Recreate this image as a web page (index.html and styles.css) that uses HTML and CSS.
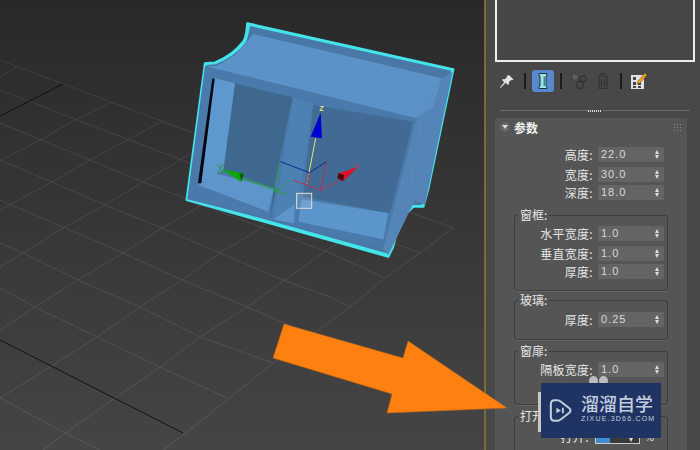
FILE: index.html
```html
<!DOCTYPE html>
<html lang="zh">
<head>
    <meta charset="UTF-8" />
    <title>窗 – 参数</title>
    <link rel="stylesheet" href="styles.css">
</head>
<body>
<div class="app">
    <div class="viewport">
        <svg class="scene" width="484" height="450" viewBox="0 0 484 450">
            <defs>
                <linearGradient id="gridFade" gradientUnits="userSpaceOnUse" x1="0" y1="60" x2="0" y2="450">
                    <stop offset="0" stop-color="#414141" />
                    <stop offset="1" stop-color="#5c5c5c" />
                </linearGradient>
            </defs>
            <g class="grid">
                <path d="M0 60L193 133L453 228" />
                <path d="M0 90L77 120L187 162L393 243L420 253" />
                <path d="M0 123L90 160L143 182L207 207L330 253L385 278" />
                <path d="M0 160L52 182L105 205L162 228L220 253L283 280L330 297L350 307" />
                <path d="M0 200L65 228L123 253L182 280L247 307L312 335" />
                <path d="M0 243L23 253L78 280L140 307L200 337L273 363" />
                <path d="M0 288L35 307L97 337L160 367L227 398" />
                <path d="M0 398L63 432L100 450" />
                <path d="M0 77L17 67" />
                <path d="M0 161L40 140L75 120L112 102" />
                <path d="M0 210L52 182L90 160L127 140L163 121" />
                <path d="M0 267L23 253L63 228L105 205L143 182L180 160L197 150" />
                <path d="M0 330L35 307L78 280L123 253L162 228L197 208L240 182" />
                <path d="M0 398L50 367L97 337L140 307L182 280L220 253L250 235L300 200" />
                <path d="M43 450L67 432L115 398L160 367L200 337L247 307L327 250L380 215" />
                <path d="M150 460L187 432L273 363L350 307L385 278L420 253L453 228" />
            </g>
            <g class="axis">
                <path d="M0 116L63 84" />
                <path d="M0 340L183 433" />
            </g>
            <g transform="translate(170 10) scale(.3333)">
                <!-- window model, in zoomed coordinates -->
                <path class="edge" d="M232 40L850 178L774 540L760 590L730 590Q690 625 684 651L669 711L655 740L50 570L105 160Q120 158 135 158Q190 135 222 92Q230 75 232 40Z" />
                <path fill="#4a78a6" d="M240 48L843 182L770 540L755 585L728 585Q685 620 678 650L662 710L650 730L58 565L110 165Q125 163 137 163Q195 140 228 97Q236 75 240 48Z" />
                <path fill="#5b93c9" d="M110 170Q125 168 137 168Q195 145 228 100L250 72L815 205L740 325L430 265Z" />
                <path fill="#4a7aab" d="M105 168L740 325L640 715L52 568Z" />
                <path fill="#5484b8" d="M815 205L740 325L735 570L765 585L848 185Z" />
                <path fill="#5b91c6" d="M815 205L740 325L790 290Z" />
                <path fill="#5585b7" d="M740 325L735 570L655 735L640 715Z" />
                <path fill="#3f688f" d="M195 220L368 262L312 535L160 480Z" />
                <path fill="#5f98cf" d="M135 205L195 220L160 480L85 522Z" />
                <path fill="#5e96cc" d="M85 525L135 490L312 535L295 605Z" />
                <path fill="#05080f" d="M127 205L134 207L94 520L84 520Z" />
                <path fill="#4d80b3" d="M370 262L430 280L375 640L310 630Z" />
                <path fill="#416b94" d="M430 285L730 335L660 610L400 560Z" />
                <path fill="#5c95cb" d="M395 568L655 610L640 688L385 635Z" />
                <path fill="#5e96cc" d="M312 628L375 582L370 640Z" />
                <path fill="#3e668d" d="M312 535L300 625L318 540Z" />
                <g class="gizmo">
                    <path stroke="#e8e86a" stroke-width="3" d="M410 525L437 385" />
                    <path fill="#0000d0" d="M452 308L456 385L422 380Z" />
                    <path stroke="#2ea043" stroke-width="4" d="M220 505L330 545" />
                    <path fill="#0ea50e" d="M155 478L220 490L212 515Z" />
                    <path fill="#0a5d0a" d="M208 490L222 492L214 515Z" />
                    <path stroke="#2b9b3b" stroke-width="3" d="M142 462L160 490M160 462L142 490" />
                    <path stroke="#c2344d" stroke-width="3" d="M520 505L455 540" />
                    <path fill="#d8142b" d="M565 470L505 490L522 512Z" />
                    <path fill="#4d0808" d="M505 490L522 495L520 514L502 505Z" />
                    <path stroke="#a8485e" stroke-width="3" d="M555 460L570 476M570 460L555 476" />
                    <path stroke="#0b2a90" stroke-width="3" d="M332 455L418 488L470 455" />
                    <path stroke="#2e9e44" stroke-width="3" d="M330 455L315 545L352 552M315 545L365 510" />
                    <path stroke="#b3304e" stroke-width="3" d="M370 510L452 542L470 455M418 488L410 525" />
                    <rect x="380" y="550" width="45" height="45" fill="#fff" fill-opacity=".12" stroke="#dcdcdc" stroke-width="3" />
                </g>
                <text class="axis-name" x="448" y="304">Z</text>
            </g>
        </svg>
    </div>

    <div class="panel">
        <div class="preview"></div>

        <div class="toolbar">
            <span class="tool">
                <svg width="16" height="16" viewBox="0 0 16 16"><path fill="#e4e4e4" d="M10 2l4.500 4.500-1.500.8-1-.3-2.200 2.200.2 1.800-1 1-2.200-2.200L1.500 15 1 14.500l4.200-5.300L3 7l1-1 1.800.2L8 4l-.3-1z" /></svg>
            </span>
            <span class="sep"></span>
            <span class="tool tool-active">
                <svg width="12" height="18" viewBox="0 0 12 18"><path fill="#9fe3e0" stroke="#12383f" d="M2 1.500h8v2.500h-1v10l1 1v1.500h-8v-1.500l1-1v-10h-1z" /><path fill="#3f8f98" d="M6.500 4.500h1.500v9.500h-1.500z" /></svg>
            </span>
            <span class="sep"></span>
            <span class="tool">
                <svg width="18" height="18" viewBox="0 0 18 18"><circle cx="5" cy="5" r="3.500" fill="#5f5f5f" stroke="#3a3a3a" /><circle cx="13" cy="7" r="3" fill="none" stroke="#333" stroke-width="1.500" /><circle cx="10" cy="13" r="3.500" fill="none" stroke="#333" stroke-width="1.500" /></svg>
            </span>
            <span class="tool">
                <svg width="12" height="18" viewBox="0 0 12 18"><path fill="none" stroke="#333" stroke-width="1.200" d="M1 4h10M4 4V1.500h4V4M2 4v12.500h8V4M4.500 6.500v8M7.500 6.500v8" /></svg>
            </span>
            <span class="sep"></span>
            <span class="tool">
                <svg width="18" height="18" viewBox="0 0 18 18"><path fill="#e2e2e2" d="M2 3h13v14H2z" /><path fill="#444" d="M4 5h3v3H4zM4 10h3v3H4zM9 10h3v3H9zM4 14h3v2H4zM9 14h3v2H9z" /><path fill="#f2a21e" stroke="#6a4310" stroke-width=".5" d="M16 1l2 2-7 8-3 1 1-3z" /></svg>
            </span>
        </div>

        <div class="drag-line"><span class="drag-grip"></span></div>

        <div class="rollout">
            <div class="rollout-head">
                <span class="twist"></span>
                <span class="rollout-name">参数</span>
                <span class="dots"></span>
            </div>

            <div class="row row-first"><label>高度:</label><span class="field">22.0<i class="spin"></i></span></div>
            <div class="row row-far"><label>宽度:</label><span class="field">30.0<i class="spin"></i></span></div>
            <div class="row"><label>深度:</label><span class="field">18.0<i class="spin"></i></span></div>

            <div class="group group-frame">
                <div class="group-name">窗框:</div>
                <div class="row row-first-in"><label>水平宽度:</label><span class="field">1.0<i class="spin"></i></span></div>
                <div class="row row-far"><label>垂直宽度:</label><span class="field">1.0<i class="spin"></i></span></div>
                <div class="row"><label>厚度:</label><span class="field">1.0<i class="spin"></i></span></div>
            </div>

            <div class="group group-glass">
                <div class="group-name">玻璃:</div>
                <div class="row row-glass"><label>厚度:</label><span class="field">0.25<i class="spin"></i></span></div>
            </div>

            <div class="group group-sash">
                <div class="group-name">窗扉:</div>
                <div class="row row-sash"><label>隔板宽度:</label><span class="field">1.0<i class="spin"></i></span></div>
            </div>

            <div class="group group-open">
                <div class="group-name">打开:</div>
                <div class="row row-open"><label>打开:</label><span class="field field-open"><b class="field-fill"></b><i class="spin"></i></span><span class="unit">%</span></div>
            </div>
        </div>
    </div>

    <!-- annotation and watermark lie over everything -->
    <svg class="arrow" width="240" height="100" viewBox="0 0 240 100">
        <path fill="#fd8010" stroke="#b8651a" stroke-width=".6" d="M11 2L130 36L135 19L234 86L114 91L119 72L0 36Z" />
    </svg>

    <span class="knob knob-a"></span>
    <span class="knob knob-b"></span>
    <span class="side-bar"></span>

    <div class="watermark">
        <svg class="wm-logo" width="24" height="27" viewBox="0 0 26 28">
            <path fill="none" stroke="#c3cde0" stroke-width="2.200" stroke-linejoin="round" d="M6 3h3q2 0 4 1.500l9 7q2.500 2.500 0 5l-9 7q-2 1.500-4 1.500H6q-4 0-4-4V7q0-4 4-4z" />
            <path fill="#c3cde0" d="M8 11l5 3-5 3zM14 11h2v6h-2z" />
        </svg>
        <div class="wm-text">
            <div class="wm-name">溜溜自学</div>
            <div class="wm-url">ZIXUE.3D66.COM</div>
        </div>
    </div>
</div>
</body>
</html>
```

FILE: styles.css
```css
html, body {
    margin: 0;
    padding: 0;
    background-color: #444;
}
.app {
    position: relative;
    display: flex;
    width: 700px;
    height: 450px;
    overflow: hidden;
    font-family: 'Noto Sans CJK SC', 'Liberation Sans', sans-serif;
    font-size: 12px;
    color: #e6e6e6;
}

/* viewport */
.viewport {
    width: 484px;
    height: 450px;
    background: linear-gradient(#292929, #454545);
}
.scene {
    display: block;
}
.grid path {
    fill: none;
    stroke: url(#gridFade);
    stroke-width: 0.8;
}
.axis path {
    fill: none;
    stroke: #0c0c0c;
    stroke-width: 0.9;
}
.edge {
    fill: #45e3ea;
    stroke: #45e3ea;
    stroke-width: 7;
    stroke-linejoin: round;
}
.gizmo path {
    stroke-linejoin: round;
}
.gizmo path[stroke] {
    fill: none;
}
.axis-name {
    font-family: 'Liberation Sans', sans-serif;
    font-size: 22px;
    font-weight: bold;
    fill: #e8e86a;
}

/* right side */
.panel {
    width: 214px;
    height: 450px;
    border-left: 2px solid #7c6b34;
    background-color: #484848;
}
.preview {
    box-sizing: border-box;
    width: 200px;
    height: 62px;
    margin-left: 9px;
    border: 2px solid #eee;
    border-top: none;
    background-color: #474747;
}
.toolbar {
    display: flex;
    align-items: center;
    height: 22px;
    margin: 8px 0 0 11px;
}
.tool {
    display: flex;
    align-items: center;
    justify-content: center;
    width: 20px;
    height: 22px;
}
.tool + .tool {
    margin-left: 4px;
}
.tool-active {
    width: 22px;
    background-color: #5a88cf;
    border-radius: 3px;
}
.sep {
    width: 2px;
    height: 16px;
    margin: 0 6px 0 7px;
    background-color: #1c1c1c;
}
.tool-active + .sep {
    margin-left: 6px;
    margin-right: 7px;
}
.drag-line {
    display: flex;
    justify-content: center;
    height: 1px;
    margin: 18px 10px 0 14px;
    background-color: #6a6a6a;
}
.drag-grip {
    width: 14px;
    height: 2px;
    background: repeating-linear-gradient(90deg, #ddd 0 1px, #484848 1px 2px);
}
.rollout {
    width: 192px;
    height: 332px;
    margin: 7px 0 0 9px;
    background-color: #555;
}
.rollout-head {
    display: flex;
    align-items: center;
    height: 18px;
    padding-left: 5px;
}
.twist {
    position: relative;
    width: 10px;
    height: 10px;
    border-radius: 50%;
    background-color: #666;
}
.twist::after {
    content: "";
    position: absolute;
    left: 2px;
    top: 3px;
    border-top: 4px solid #ddd;
    border-left: 3px solid transparent;
    border-right: 3px solid transparent;
}
.rollout-name {
    margin-left: 4px;
    font-weight: bold;
    color: #f2f2f2;
}
.dots {
    width: 9px;
    height: 9px;
    margin-left: auto;
    margin-right: 5px;
    background: radial-gradient(circle at 1.5px 1.5px, #8c8c8c 0.8px, transparent 1px) 0 0 / 3px 3px;
}
.row {
    display: flex;
    justify-content: flex-end;
    align-items: center;
    gap: 5px;
    height: 15px;
    margin-top: 3px;
    padding-right: 23px;
}
.row-first {
    margin-top: 11px;
}
.row-far {
    margin-top: 5px;
}
.row-first-in {
    margin-top: 3px;
}
.row label {
    white-space: nowrap;
    line-height: 15px;
    letter-spacing: 0.3px;
}
.field {
    position: relative;
    box-sizing: border-box;
    width: 66px;
    height: 15px;
    padding-left: 3px;
    background-color: #646464;
    font-family: 'Liberation Sans', sans-serif;
    font-size: 11px;
    line-height: 15px;
    letter-spacing: 1px;
    color: #d8d8d8;
}
.spin {
    position: absolute;
    right: 5px;
    top: 3px;
    border-bottom: 4px solid #ddd;
    border-left: 2.500px solid transparent;
    border-right: 2.500px solid transparent;
}
.spin::after {
    content: "";
    position: absolute;
    left: -2.500px;
    top: 5px;
    border-top: 4px solid #ddd;
    border-left: 2.500px solid transparent;
    border-right: 2.500px solid transparent;
}

.group {
    box-sizing: border-box;
    margin-left: 19px;
    width: 154px;
    border: 1px solid #3d3d3d;
    border-radius: 3px;
    box-shadow: 0 1px 0 #666;
}
.group .row {
    padding-right: 3px;
}
.group-name {
    width: max-content;
    height: 16px;
    margin: -9px 0 0 3px;
    padding: 0 2px;
    background-color: #555;
    line-height: 16px;
}
.group-frame {
    height: 76px;
    margin-top: 15px;
}
.group-glass {
    height: 40px;
    margin-top: 9px;
}
.row-glass {
    margin-top: 4px;
}
.group-sash {
    height: 54px;
    margin-top: 11px;
}
.row-sash {
    margin-top: 3px;
}
.group-open {
    height: 60px;
    margin-top: 11px;
}
.row-open {
    margin-top: 5px;
}
.row-open label {
    margin-right: 1px;
}
.field-open {
    width: 45px;
    background-color: #3a3a3a;
    border: 1px solid #ccc;
}
.field-fill {
    display: block;
    width: 14px;
    height: 13px;
    margin-left: -3px;
    background-color: #3d8bd0;
}
.group-open .row {
    padding-right: 13px;
}
.unit {
    font-size: 10px;
}

/* overlays */
.arrow {
    position: absolute;
    left: 273px;
    top: 322px;
}
.knob {
    position: absolute;
    top: 376px;
    width: 9px;
    height: 10px;
    border-radius: 50%;
    background-color: #bcbcbc;
}
.knob-a {
    left: 589px;
}
.knob-b {
    left: 599px;
}
.side-bar {
    position: absolute;
    left: 538px;
    top: 392px;
    width: 3px;
    height: 40px;
    background-color: #c8c8c8;
}
.watermark {
    position: absolute;
    left: 541px;
    top: 383px;
    display: flex;
    align-items: center;
    box-sizing: border-box;
    width: 120px;
    height: 55px;
    padding-left: 8px;
    background-color: #1f3462;
}
.wm-text {
    margin: -5px 0 0 8px;
    color: #c3cde0;
}
.wm-name {
    font-size: 18px;
    font-weight: 500;
    line-height: 22px;
    white-space: nowrap;
}
.wm-url {
    font-family: 'Liberation Sans', sans-serif;
    font-size: 7px;
    line-height: 10px;
    letter-spacing: 1.2px;
    white-space: nowrap;
}
```
